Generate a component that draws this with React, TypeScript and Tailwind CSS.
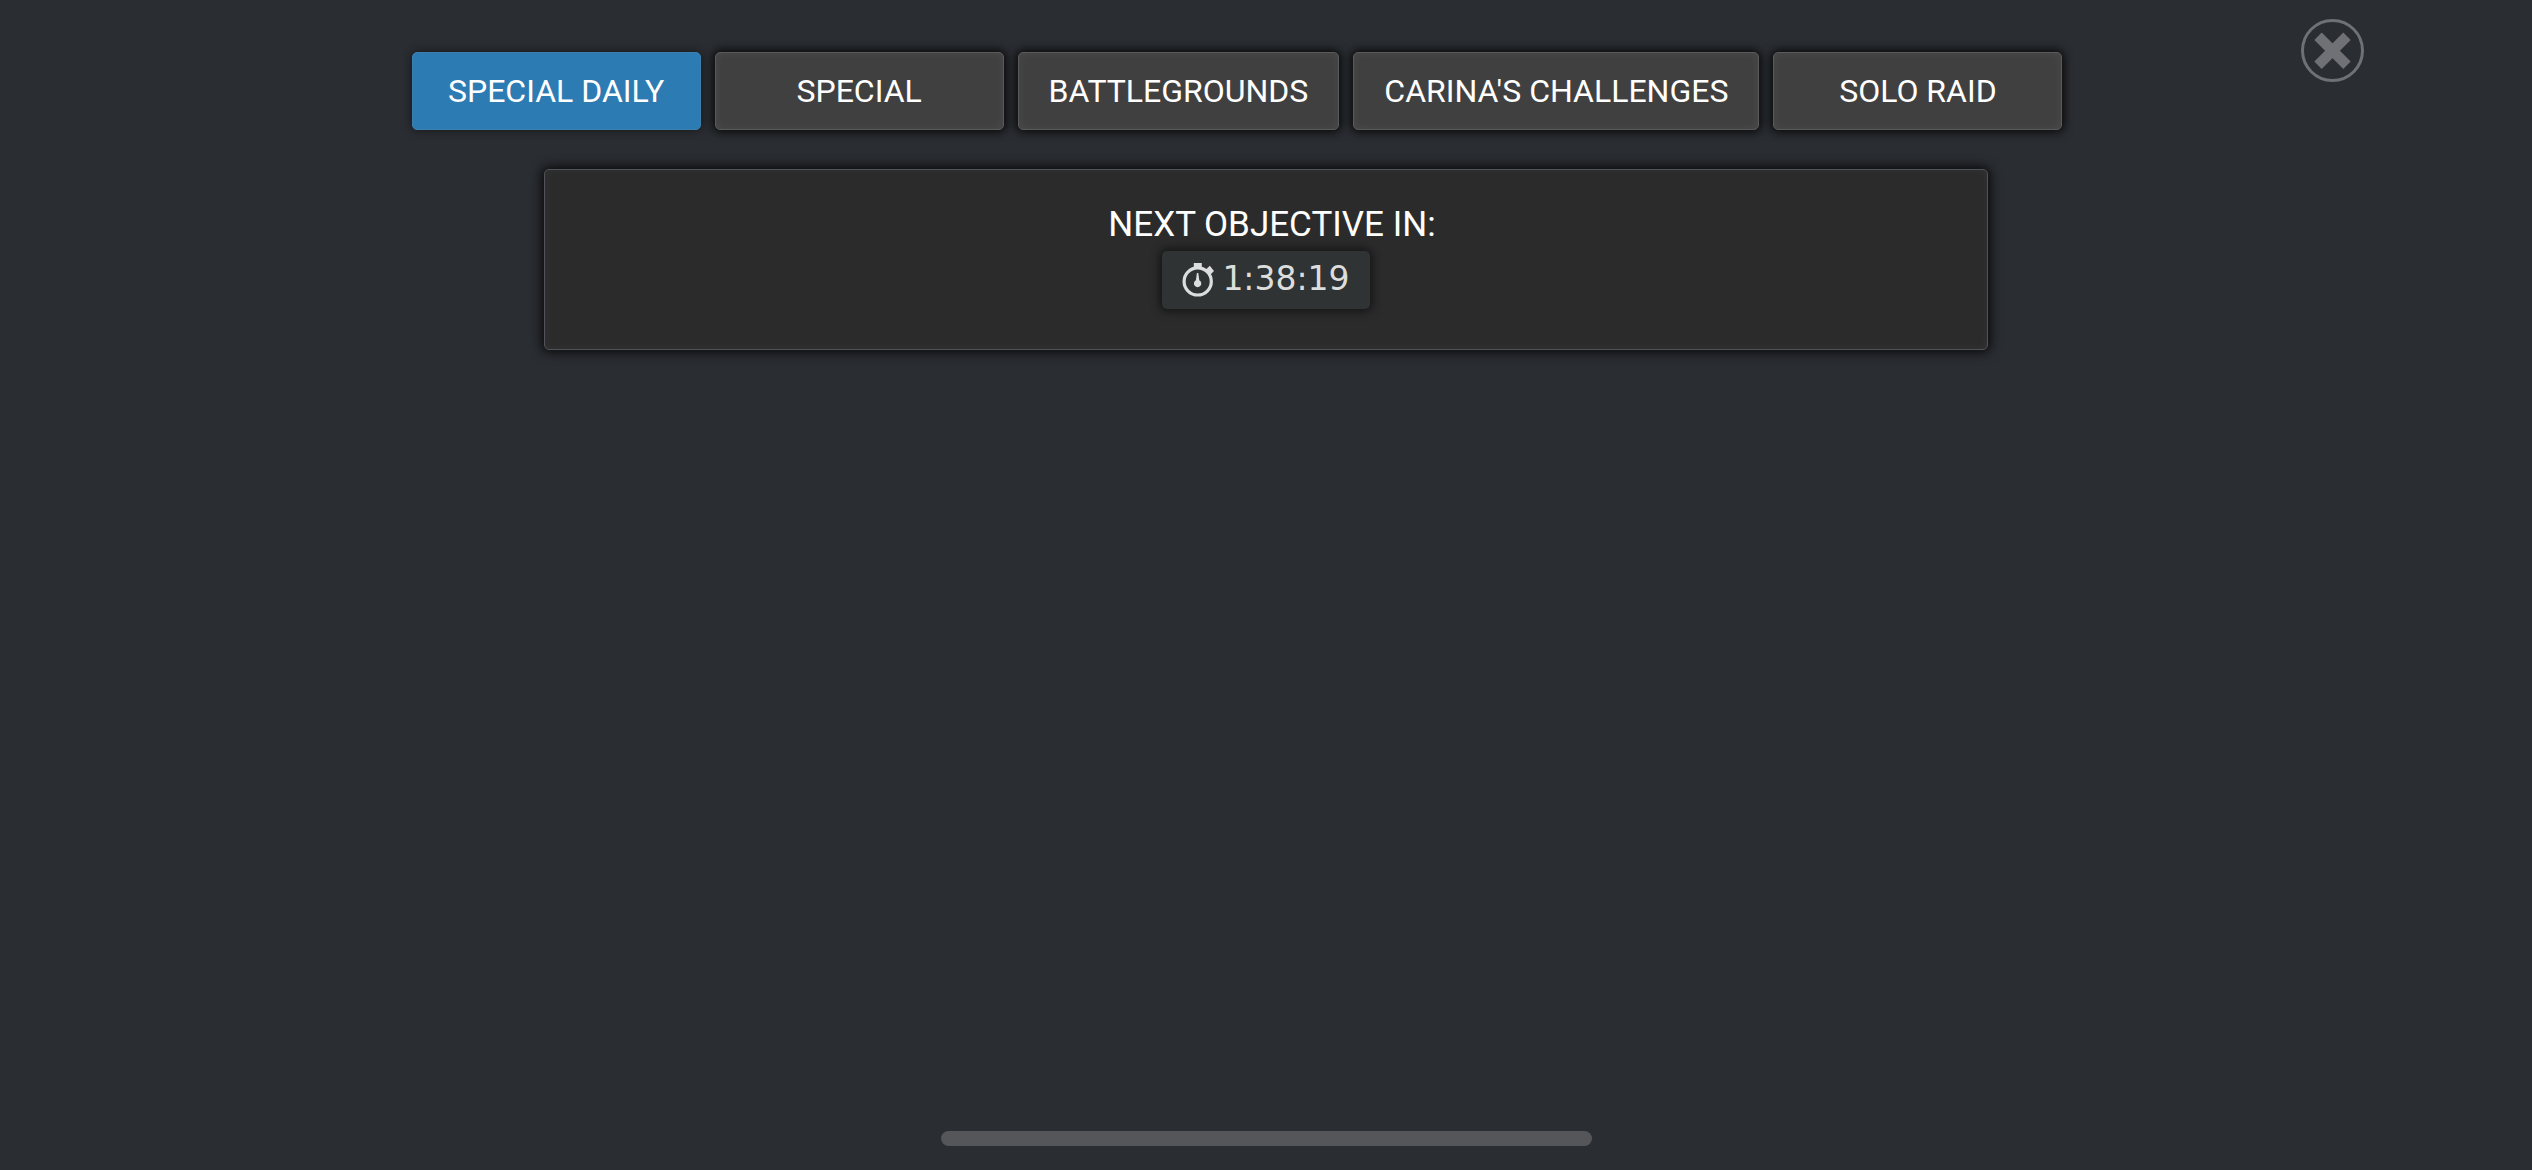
import { useState } from 'react';
import clsx from 'clsx';

const TABS = ['Special Daily', 'Special', 'Battlegrounds', "Carina's Challenges", 'Solo Raid'];

function CloseIcon() {
  return (
    <svg className="size-[63px]" viewBox="0 0 63 63" fill="none" stroke="currentColor" aria-hidden="true">
      <circle cx="31.5" cy="31.5" r="30" strokeWidth="3" />
      <path d="M17 17.3L46 46.3M46 17.3L17 46.3" strokeWidth="10.4" />
    </svg>
  );
}

function StopwatchIcon() {
  return (
    <svg className="h-[36px] w-[32px]" viewBox="0 0 32 36" fill="currentColor" aria-hidden="true">
      <circle cx="15.7" cy="19.4" r="13.6" fill="none" stroke="currentColor" strokeWidth="3.2" />
      <path d="M11.8 1h8v6h-8z" />
      <path d="M23.6 7.8L27.8 3.8L32 9L28.3 12.8z" />
      <path d="M14.9 11h1.4l1 7.2a3.7 3.7 0 1 1-3.4 0z" />
    </svg>
  );
}

export default function App() {
  const [active, setActive] = useState(TABS[0]);

  return (
    <div className="flex min-h-screen flex-col bg-[#2a2d32] font-[Roboto,sans-serif] text-white">
      {/* Tabs + close */}
      <header className="grid grid-cols-[1fr_auto_1fr] items-start pt-[19px] pr-[168px] pl-[110px]">
        <nav className="col-start-2 mt-[33px] flex gap-[14px]">
          {TABS.map((tab) => (
            <button
              key={tab}
              type="button"
              onClick={() => setActive(tab)}
              className={clsx(
                'h-[78px] min-w-[289px] rounded-[5px] border px-[30px] text-[32px] whitespace-nowrap uppercase',
                active === tab
                  ? 'border-[#3c80b0] bg-[#2d7bb3] shadow-[0_0_10px_1px_rgba(0,0,0,0.45)]'
                  : 'border-[#595a5a] bg-[#404040] shadow-[0_0_10px_2px_rgba(0,0,0,0.85),inset_0_0_10px_rgba(255,255,255,0.06)]'
              )}
            >
              {tab}
            </button>
          ))}
        </nav>
        <button type="button" aria-label="Close" className="justify-self-end text-[#6f7174]">
          <CloseIcon />
        </button>
      </header>

      {/* Countdown panel */}
      <main className="mx-auto mt-[39px] flex w-[57%] flex-col items-center rounded-[5px] border border-[#505357] bg-[#2b2b2b] pt-[35px] pb-[40px] shadow-[0_0_12px_2px_rgba(0,0,0,0.85),inset_0_0_10px_rgba(255,255,255,0.04)]">
        <h1 className="pl-3 text-[35px] leading-[40px] uppercase">Next objective in:</h1>
        <div className="mt-[6px] flex h-[58px] items-center gap-[8px] rounded-[5px] bg-[#2f3334] px-[20px] text-[#dcdddd] shadow-[0_0_10px_2px_rgba(0,0,0,0.6)]">
          <StopwatchIcon />
          <time className="pb-[3px] font-['DejaVu_Sans',sans-serif] text-[33px] leading-[40px]">1:38:19</time>
        </div>
      </main>

      <div className="mx-auto mt-auto mb-[24px] h-[15px] w-[651px] max-w-full rounded-full bg-[#545659]" />
    </div>
  );
}
